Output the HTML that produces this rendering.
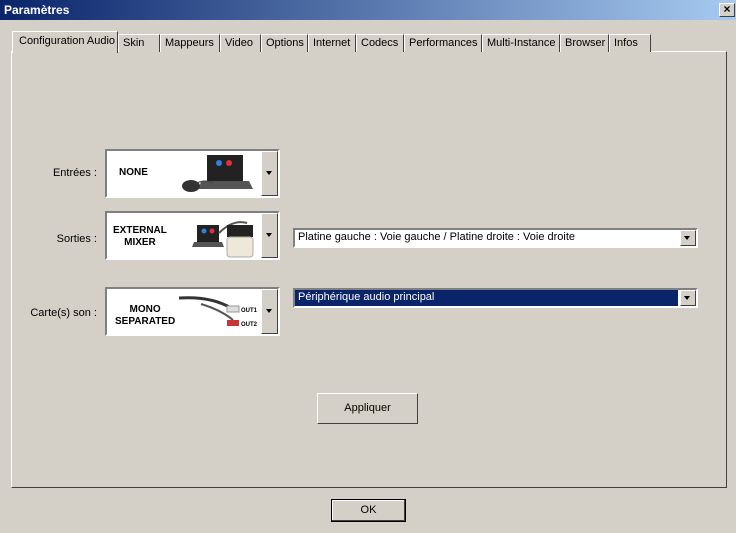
<!DOCTYPE html>
<html><head><meta charset="utf-8"><style>
*{margin:0;padding:0;box-sizing:border-box}
body{width:736px;height:533px;background:#d4d0c8;font-family:"Liberation Sans",sans-serif;font-size:11px;color:#000;position:relative;overflow:hidden}
.a{position:absolute}
.title{left:0;top:0;width:736px;height:20px;background:linear-gradient(90deg,#0a246a,#a6caf0);color:#fff;font-weight:bold;font-size:12px;line-height:20px;padding-left:4px}
.close{left:719px;top:3px;width:16px;height:14px;background:#d4d0c8;border:1px solid;border-color:#fff #404040 #404040 #fff;font-size:12px;line-height:11px;text-align:center;font-weight:bold}
.tab{top:34px;height:18px;border:1px solid;border-color:#fff #404040 transparent #fff;border-bottom:none;background:#d4d0c8;line-height:16px;padding-left:4px;font-size:11px}
.panel{left:11px;top:51px;width:716px;height:437px;border:1px solid;border-color:#fff #404040 #404040 #fff}
.imgbox{left:105px;width:175px;height:49px;border:2px solid;border-color:#808080 #fff #fff #808080;background:#fff}
.imgbox .dd{position:absolute;right:0;top:0;width:17px;height:45px;background:#d4d0c8;border:1px solid;border-color:#fff #404040 #404040 #fff}
.arrow{position:absolute;left:4px;top:19px;width:0;height:0;border-left:3.5px solid transparent;border-right:3.5px solid transparent;border-top:4px solid #000}
.lbl{font-size:11px;text-align:right;width:90px;left:7px}
.bt{font-weight:bold;font-size:10px;text-align:center;position:absolute;line-height:12px;font-family:"Liberation Sans",sans-serif}
.combo{left:293px;width:405px;height:20px;border:2px solid;border-color:#808080 #fff #fff #808080;background:#fff;line-height:15px;padding-left:3px}
.combo .d2{position:absolute;right:0;top:0;width:16px;height:16px;background:#d4d0c8;border:1px solid;border-color:#fff #404040 #404040 #fff}
.combo .arrow{left:3px;top:5px}
.btn{background:#d4d0c8;border:1px solid;border-color:#fff #404040 #404040 #fff;text-align:center}
</style></head><body>
<div class="a title">Paramètres</div>
<div class="a close">×</div>
<div class="a panel"></div>
<div class="a tab" style="left:118px;width:42px">Skin</div>
<div class="a tab" style="left:160px;width:60px">Mappeurs</div>
<div class="a tab" style="left:220px;width:41px">Video</div>
<div class="a tab" style="left:261px;width:47px">Options</div>
<div class="a tab" style="left:308px;width:48px">Internet</div>
<div class="a tab" style="left:356px;width:48px">Codecs</div>
<div class="a tab" style="left:404px;width:78px">Performances</div>
<div class="a tab" style="left:482px;width:78px">Multi-Instance</div>
<div class="a tab" style="left:560px;width:49px">Browser</div>
<div class="a tab" style="left:609px;width:42px">Infos</div>
<div class="a tab" style="left:12px;top:31px;width:106px;height:22px;line-height:19px;padding-left:6px;z-index:2">Configuration Audio</div>

<div class="a lbl" style="top:167px">Entrées :</div>
<div class="a imgbox" style="top:149px">
 <div class="bt" style="left:12px;top:16px">NONE</div>
 <svg class="a" style="left:72px;top:2px" width="80" height="42"><rect x="28" y="2" width="36" height="26" fill="#222"/><circle cx="40" cy="10" r="3" fill="#3080e0"/><circle cx="50" cy="10" r="3" fill="#e03040"/><path d="M22 28h48l4 8H20z" fill="#555"/><ellipse cx="12" cy="33" rx="9" ry="6" fill="#333"/><path d="M18 30 Q26 26 34 30" stroke="#444" fill="none"/></svg>
 <div class="dd"><div class="arrow"></div></div>
</div>

<div class="a lbl" style="top:233px">Sorties :</div>
<div class="a imgbox" style="top:211px">
 <div class="bt" style="left:6px;top:12px">EXTERNAL<br>MIXER</div>
 <svg class="a" style="left:76px;top:2px" width="80" height="44"><rect x="14" y="10" width="22" height="17" fill="#222"/><circle cx="21" cy="16" r="2.5" fill="#3080e0"/><circle cx="29" cy="16" r="2.5" fill="#e03040"/><path d="M11 27h28l2 5H9z" fill="#555"/><path d="M36 18 Q50 4 64 8" stroke="#555" stroke-width="2" fill="none"/><rect x="44" y="10" width="26" height="12" fill="#222"/><rect x="44" y="22" width="26" height="20" rx="3" fill="#eee8d8" stroke="#aaa"/></svg>
 <div class="dd"><div class="arrow"></div></div>
</div>

<div class="a lbl" style="top:307px">Carte(s) son :</div>
<div class="a imgbox" style="top:287px">
 <div class="bt" style="left:8px;top:15px">MONO<br>SEPARATED</div>
 <svg class="a" style="left:64px;top:1px" width="94" height="44"><path d="M8 8 Q40 6 60 18" stroke="#333" stroke-width="3" fill="none"/><path d="M30 14 Q50 20 62 30" stroke="#555" stroke-width="2" fill="none"/><rect x="56" y="16" width="12" height="6" fill="#ddd" stroke="#999"/><rect x="56" y="30" width="12" height="6" fill="#c33"/><text x="70" y="22" font-size="6" font-weight="bold" font-family="Liberation Sans">OUT1</text><text x="70" y="36" font-size="6" font-weight="bold" font-family="Liberation Sans">OUT2</text></svg>
 <div class="dd"><div class="arrow"></div></div>
</div>

<div class="a combo" style="top:228px">Platine gauche : Voie gauche / Platine droite : Voie droite<div class="d2"><div class="arrow"></div></div></div>
<div class="a combo" style="top:288px"><span style="background:#0a246a;color:#fff;position:absolute;left:0;top:0;width:383px;height:16px;padding-left:3px">Périphérique audio principal</span><div class="d2"><div class="arrow"></div></div></div>

<div class="a btn" style="left:317px;top:393px;width:101px;height:31px;line-height:29px">Appliquer</div>
<div class="a btn" style="left:331px;top:499px;width:75px;height:23px;line-height:20px;border:1px solid #000;box-shadow:inset -1px -1px #404040,inset 1px 1px #fff">OK</div>
</body></html>
